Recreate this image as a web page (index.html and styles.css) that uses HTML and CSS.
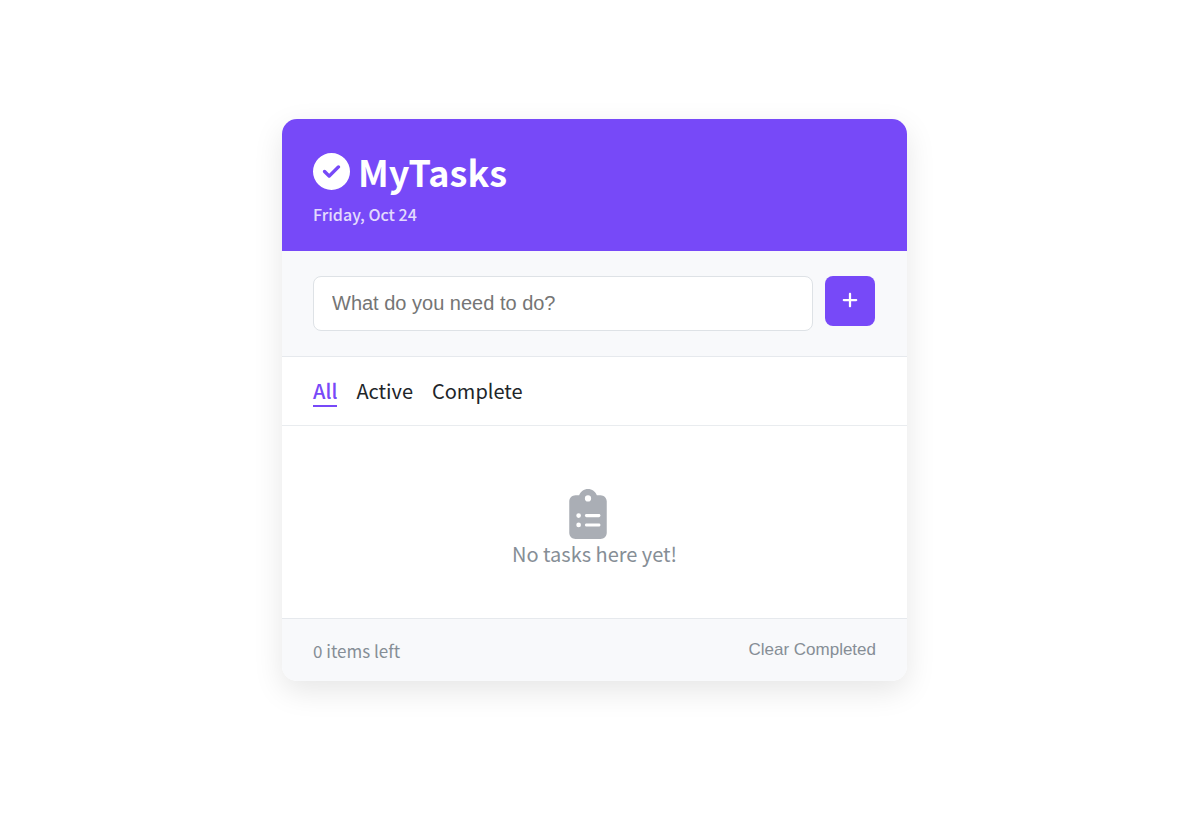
FILE: index.html
```html
<!DOCTYPE html>
<html lang="en">
<head>
<meta charset="utf-8">
<meta name="viewport" content="width=device-width, initial-scale=1">
<title>MyTasks</title>
<link rel="stylesheet" href="styles.css">
</head>
<body>
<main class="card">
  <header class="header">
    <h1 class="title">
      <svg class="title-icon" viewBox="0 0 512 512" aria-hidden="true"><path d="M256 512A256 256 0 1 0 256 0a256 256 0 1 0 0 512zM369 209L241 337c-9.400 9.400-24.600 9.400-33.900 0l-64-64c-9.400-9.400-9.400-24.600 0-33.900s24.600-9.400 33.900 0l47 47L335 175c9.400-9.400 24.600-9.400 33.900 0s9.400 24.600 0 33.900z"/></svg>
      MyTasks
    </h1>
    <p class="date">Friday, Oct 24</p>
  </header>
  <form class="add" onsubmit="return false">
    <input class="add-input" type="text" placeholder="What do you need to do?" aria-label="New task">
    <button class="add-button" type="submit" aria-label="Add task">
      <svg class="add-icon" viewBox="0 0 448 512" aria-hidden="true"><path d="M256 80c0-17.700-14.300-32-32-32s-32 14.300-32 32V224H48c-17.700 0-32 14.300-32 32s14.300 32 32 32H192V432c0 17.700 14.300 32 32 32s32-14.300 32-32V288H400c17.700 0 32-14.300 32-32s-14.300-32-32-32H256V80z"/></svg>
    </button>
  </form>
  <nav class="filters">
    <a class="filter filter-active" href="#all">All</a>
    <a class="filter" href="#active">Active</a>
    <a class="filter" href="#complete">Complete</a>
  </nav>
  <section class="empty">
    <svg class="empty-icon" viewBox="0 0 384 512" aria-hidden="true"><path d="M192 0c-41.800 0-77.400 26.700-90.500 64H64C28.700 64 0 92.700 0 128V448c0 35.300 28.700 64 64 64H320c35.300 0 64-28.700 64-64V128c0-35.300-28.700-64-64-64H282.500C269.400 26.700 233.800 0 192 0zm0 64a32 32 0 1 1 0 64 32 32 0 1 1 0-64zM72 272a24 24 0 1 1 48 0 24 24 0 1 1-48 0zm104-16H304c8.800 0 16 7.200 16 16s-7.200 16-16 16H176c-8.800 0-16-7.200-16-16s7.200-16 16-16zM72 368a24 24 0 1 1 48 0 24 24 0 1 1-48 0zm88 0c0-8.800 7.200-16 16-16H304c8.800 0 16 7.200 16 16s-7.200 16-16 16H176c-8.800 0-16-7.200-16-16z"/></svg>
    <p class="empty-text">No tasks here yet!</p>
  </section>
  <footer class="footer">
    <span class="count">0 items left</span>
    <button class="clear" type="button">Clear Completed</button>
  </footer>
</main>
</body>
</html>
```

FILE: styles.css
```css
* {
  box-sizing: border-box;
  margin: 0;
  padding: 0;
}

body {
  display: flex;
  align-items: center;
  justify-content: center;
  min-height: 100vh;
  padding: 0 10px 21px 0;
  background: #fff;
  color: #212529;
  font-family: "Noto Sans CJK JP", "Noto Sans CJK SC", sans-serif;
}

.card {
  width: 100%;
  max-width: 625px;
  overflow: hidden;
  border-radius: 15px;
  background: #fff;
  box-shadow: 0 10px 30px rgba(0, 0, 0, 0.1);
}

.header {
  padding: 31px;
  padding-bottom: 23px;
  background: #7749f8;
  color: #fff;
}

.title {
  display: flex;
  align-items: center;
  gap: 8px;
  font-size: 36px;
  font-weight: 700;
  line-height: 43px;
}

.title-icon {
  width: 37px;
  height: 37px;
  fill: currentColor;
}

.date {
  margin-top: 7px;
  font-size: 16px;
  font-weight: 500;
  line-height: 28px;
  opacity: 0.8;
}

.add {
  display: flex;
  align-items: flex-start;
  gap: 12px;
  padding: 25px 32px 25px 31px;
  border-bottom: 1px solid #e6e9ed;
  background: #f8f9fb;
}

.add-input {
  flex: 1;
  min-width: 0;
  height: 55px;
  padding: 0 18px;
  border: 1px solid #dee2e6;
  border-radius: 8px;
  background: #fff;
  font-family: "Liberation Sans", Arial, sans-serif;
  font-size: 20px;
}

.add-input::placeholder {
  color: #757575;
}

.add-button {
  display: flex;
  align-items: center;
  justify-content: center;
  width: 50px;
  height: 50px;
  padding-bottom: 3px;
  border: 0;
  border-radius: 8px;
  background: #7749f8;
  color: #fff;
}

.add-icon {
  width: 16px;
  height: 18px;
  fill: currentColor;
}

.filters {
  display: flex;
  gap: 19px;
  padding: 19px 31px 18px;
  border-bottom: 1px solid #e9ecef;
}

.filter {
  border-bottom: 2px solid transparent;
  color: #212529;
  font-size: 20px;
  line-height: 29px;
  text-decoration: none;
}

.filter-active {
  border-color: #7749f8;
  color: #7749f8;
  font-weight: 500;
}

.empty {
  display: flex;
  flex-direction: column;
  align-items: center;
  padding: 63px 31px 50px;
  color: #868e96;
}

.empty-icon {
  width: 38px;
  height: 50px;
  margin-right: 14px;
  fill: #aaaeb5;
}

.empty-text {
  font-size: 20px;
  line-height: 29px;
}

.footer {
  display: flex;
  align-items: flex-start;
  justify-content: space-between;
  padding: 19px 31px 18px;
  border-top: 1px solid #e6e9ed;
  background: #f8f9fb;
  color: #868e96;
}

.count {
  font-size: 17px;
  line-height: 25px;
}

.clear {
  border: 0;
  background: none;
  color: #868e96;
  font-family: "Liberation Sans", Arial, sans-serif;
  font-size: 17px;
  line-height: 23px;
}
```
